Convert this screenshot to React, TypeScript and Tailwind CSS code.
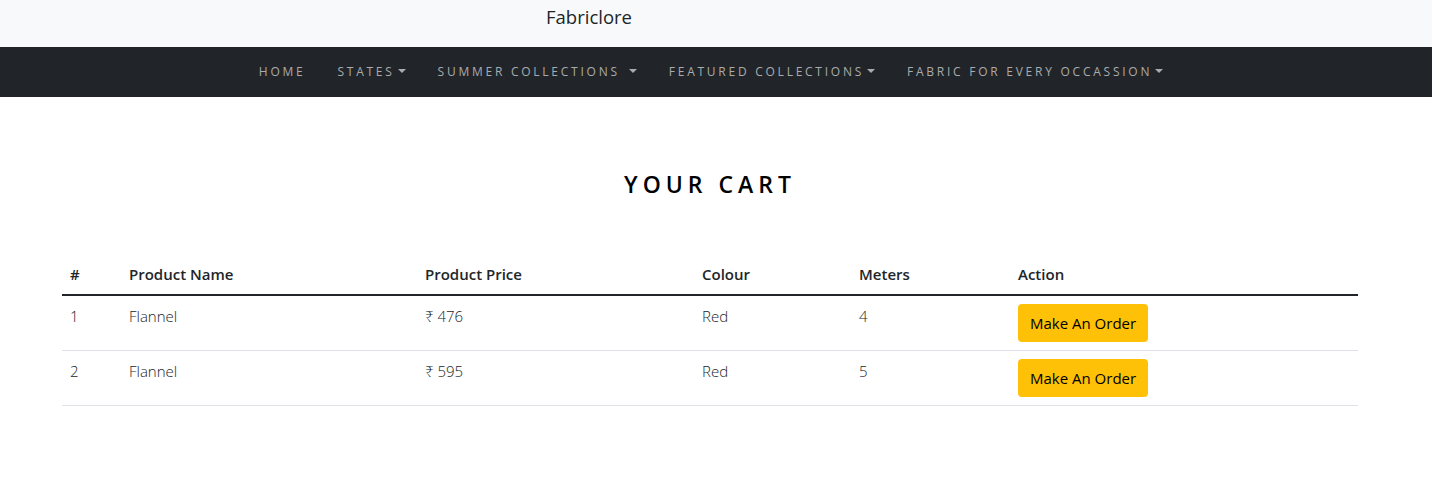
const navItems = [
  { label: 'HOME', caret: false, space: false },
  { label: 'STATES', caret: true, space: false },
  { label: 'SUMMER COLLECTIONS', caret: true, space: true },
  { label: 'FEATURED COLLECTIONS', caret: true, space: false },
  { label: 'FABRIC FOR EVERY OCCASSION', caret: true, space: false },
];

const cart = [
  { id: 1, name: 'Flannel', price: 476, colour: 'Red', meters: 4 },
  { id: 2, name: 'Flannel', price: 595, colour: 'Red', meters: 5 },
];

const Caret = () => (
  <span className="inline-block ml-[3px] align-[3px] border-x-[4px] border-t-[4px] border-x-transparent border-t-current" />
);

const App = () => {
  return (
    <div className="min-h-[487px] bg-white text-[#212529]" style={{ fontFamily: '"Open Sans", "Noto Sans", sans-serif' }}>
      <header className="h-[47px] bg-[#f8f9fa] flex items-center">
        <span className="ml-[546px] text-[18.5px] leading-none -mt-[12px]">Fabriclore</span>
      </header>

      <nav className="h-[50px] bg-[#212529] flex items-center justify-center pr-[10px]">
        {navItems.map((item) => (
          <a
            key={item.label}
            href="#"
            className="px-4 text-[12px] tracking-[2.75px] text-[#a9abad] font-normal"
          >
            {item.label}
            {item.space && <span className="inline-block w-[6px]" />}
            {item.caret && <Caret />}
          </a>
        ))}
      </nav>

      <main className="pl-[62px] pr-[74px]">
        <h1 className="text-center text-[23px] font-semibold text-black tracking-[5px] pt-[71px] pb-[55px] leading-[32px]">YOUR CART</h1>

        <table className="w-full text-left text-[15px]">
          <thead>
            <tr className="border-b-2 border-[#212529]">
              <th className="w-[59px] p-2 font-semibold">#</th>
              <th className="w-[296px] p-2 font-semibold">Product Name</th>
              <th className="w-[277px] p-2 font-semibold">Product Price</th>
              <th className="w-[157px] p-2 font-semibold">Colour</th>
              <th className="w-[159px] p-2 font-semibold">Meters</th>
              <th className="p-2 font-semibold">Action</th>
            </tr>
          </thead>
          <tbody className="font-light">
            {cart.map((row) => (
              <tr key={row.id} className="border-b border-[#dee2e6] align-top">
                <td className="p-2 leading-6">{row.id}</td>
                <td className="p-2 leading-6">{row.name}</td>
                <td className="p-2 leading-6">₹ {row.price}</td>
                <td className="p-2 leading-6">{row.colour}</td>
                <td className="p-2 leading-6">{row.meters}</td>
                <td className="p-2">
                  <button className="bg-[#ffc107] text-[#000] font-normal rounded-[4px] px-3 py-[6px] text-[15px] leading-[26px]">
                    Make An Order
                  </button>
                </td>
              </tr>
            ))}
          </tbody>
        </table>
      </main>
    </div>
  );
};

export default App;
